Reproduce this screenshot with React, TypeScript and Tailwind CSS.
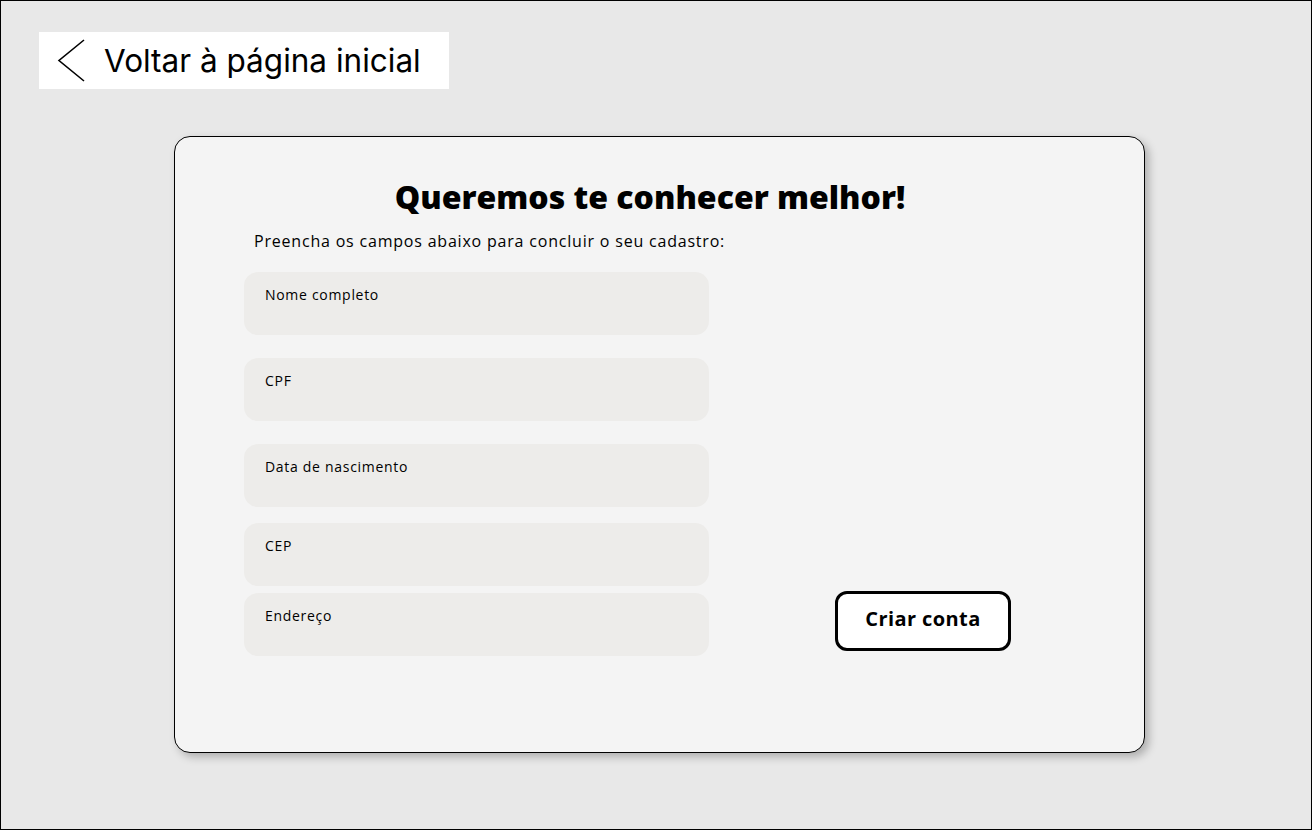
import { useState } from "react";

// Data
const fields = [
  { id: 1, label: "Nome completo", gap: "mt-0" },
  { id: 2, label: "CPF", gap: "mt-[23px]" },
  { id: 3, label: "Data de nascimento", gap: "mt-[23px]" },
  { id: 4, label: "CEP", gap: "mt-[16px]" },
  { id: 5, label: "Endereço", gap: "mt-[7px]" },
];

const poppins = { fontFamily: "'Open Sans', 'Noto Sans', sans-serif" };

export default function App() {
  const [values, setValues] = useState<Record<number, string>>({});

  return (
    <div className="w-[1312px] h-[830px] bg-[#e8e8e8] border border-black overflow-hidden">
      {/* back link */}
      <div className="pt-[31px] pl-[38px]">
        <a
          href="#"
          className="flex items-center w-[410px] h-[57px] bg-white text-black"
        >
          <svg width="44" height="57" viewBox="0 0 44 57" className="ml-[14px] shrink-0">
            <polyline
              points="31,8 6,28.5 31,49"
              fill="none"
              stroke="black"
              strokeWidth="1.6"
            />
          </svg>
          <span
            className="ml-[7px] text-[31.5px] leading-none"
            style={{ fontFamily: "Inter, sans-serif" }}
          >
            Voltar à página inicial
          </span>
        </a>
      </div>

      {/* card */}
      <div className="ml-[173px] mt-[47px] w-[971px] h-[617px] bg-[#f4f4f4] border border-black rounded-[16px] shadow-[4px_4px_8px_rgba(0,0,0,0.25)]" style={poppins}>
        <h1 className="pt-[40px] pr-[19px] text-center text-[32px] leading-[40px] font-extrabold text-black">
          Queremos te conhecer melhor!
        </h1>
        <p className="mt-[12px] ml-[79px] text-[16px] leading-[24px] font-medium tracking-[0.8px] text-black">
          Preencha os campos abaixo para concluir o seu cadastro:
        </p>

        <div className="flex items-end mt-[19px]">
          {/* inputs */}
          <div className="flex flex-col ml-[69px] w-[465px]">
            {fields.map((field) => (
              <label
                key={field.id}
                className={`${field.gap} h-[63px] rounded-[14px] bg-[#edecea] pt-[13px] pl-[21px] pr-4 flex flex-col`}
              >
                <span className="text-[14px] leading-[20px] font-medium tracking-[0.7px] text-black">{field.label}</span>
                <input
                  className="bg-transparent outline-none text-[14px] text-black"
                  value={values[field.id] ?? ""}
                  onChange={(e) => setValues({ ...values, [field.id]: e.target.value })}
                />
              </label>
            ))}
          </div>

          {/* submit */}
          <button className="ml-[126px] mb-[5px] w-[176px] h-[60px] pb-[5px] bg-white border-[3px] border-black rounded-[12px] text-[20px] font-bold tracking-[0.4px] text-black">
            Criar conta
          </button>
        </div>
      </div>
    </div>
  );
}
